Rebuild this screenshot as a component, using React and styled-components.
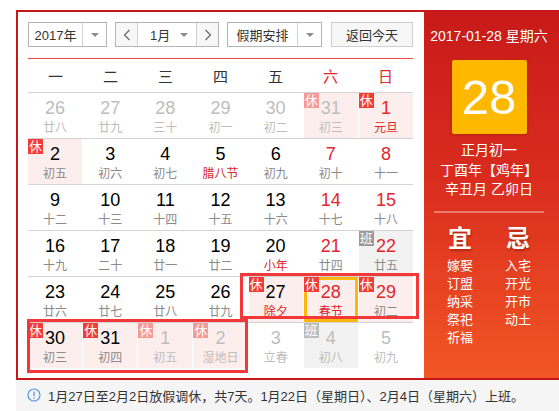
import React from 'react';
import styled, { createGlobalStyle, css } from 'styled-components';

const GlobalStyle = createGlobalStyle`
  html, body {
    margin: 0;
    padding: 0;
    background: #fff;
    overflow: hidden;
  }
  body {
    font-family: "Liberation Sans", "Noto Sans CJK SC", Arial, sans-serif;
    color: #333;
  }
`;

const WEEK = ['一', '二', '三', '四', '五', '六', '日'];

// f: other month, b: badge ('rest' | 'work'), r: red number, lr: red lunar, sel: selected
const ROWS = [
  [
    { d: 26, l: '廿八', f: 1 },
    { d: 27, l: '廿九', f: 1 },
    { d: 28, l: '三十', f: 1 },
    { d: 29, l: '初一', f: 1 },
    { d: 30, l: '初二', f: 1 },
    { d: 31, l: '初三', f: 1, b: 'rest' },
    { d: 1, l: '元旦', r: 1, lr: 1, b: 'rest' }
  ],
  [
    { d: 2, l: '初五', b: 'rest' },
    { d: 3, l: '初六' },
    { d: 4, l: '初七' },
    { d: 5, l: '腊八节', lr: 1 },
    { d: 6, l: '初九' },
    { d: 7, l: '初十', r: 1 },
    { d: 8, l: '十一', r: 1 }
  ],
  [
    { d: 9, l: '十二' },
    { d: 10, l: '十三' },
    { d: 11, l: '十四' },
    { d: 12, l: '十五' },
    { d: 13, l: '十六' },
    { d: 14, l: '十七', r: 1 },
    { d: 15, l: '十八', r: 1 }
  ],
  [
    { d: 16, l: '十九' },
    { d: 17, l: '二十' },
    { d: 18, l: '廿一' },
    { d: 19, l: '廿二' },
    { d: 20, l: '小年', lr: 1 },
    { d: 21, l: '廿四', r: 1 },
    { d: 22, l: '廿五', r: 1, b: 'work' }
  ],
  [
    { d: 23, l: '廿六' },
    { d: 24, l: '廿七' },
    { d: 25, l: '廿八' },
    { d: 26, l: '廿九' },
    { d: 27, l: '除夕', lr: 1, b: 'rest' },
    { d: 28, l: '春节', r: 1, lr: 1, b: 'rest', sel: 1 },
    { d: 29, l: '初二', r: 1, b: 'rest' }
  ],
  [
    { d: 30, l: '初三', b: 'rest' },
    { d: 31, l: '初四', b: 'rest' },
    { d: 1, l: '初五', f: 1, b: 'rest' },
    { d: 2, l: '湿地日', f: 1, b: 'rest' },
    { d: 3, l: '立春', f: 1 },
    { d: 4, l: '初八', f: 1, b: 'work' },
    { d: 5, l: '初九', f: 1 }
  ]
];

const YI = ['嫁娶', '订盟', '纳采', '祭祀', '祈福'];
const JI = ['入宅', '开光', '开市', '动土'];

export default function App() {
  return (
    <>
      <GlobalStyle />
      <Page>
        <Frame>
          <Main>
            <Toolbar>
              <Select $w={79}>
                <SelectText>2017年</SelectText>
                <Arrow><Caret /></Arrow>
              </Select>
              <MonthBox>
                <NavBtn>
                  <svg width="8" height="12" viewBox="0 0 8 12">
                    <polyline points="6.5,1 1.5,6 6.5,11" fill="none" stroke="#666" strokeWidth="1.2" />
                  </svg>
                </NavBtn>
                <MonthText>
                  <span>1月</span>
                  <Caret />
                </MonthText>
                <NavBtn $right>
                  <svg width="8" height="12" viewBox="0 0 8 12">
                    <polyline points="1.5,1 6.5,6 1.5,11" fill="none" stroke="#666" strokeWidth="1.2" />
                  </svg>
                </NavBtn>
              </MonthBox>
              <Select $w={95}>
                <SelectText>假期安排</SelectText>
                <Arrow><Caret /></Arrow>
              </Select>
              <TodayBtn>返回今天</TodayBtn>
            </Toolbar>

            <WeekHeader>
              {WEEK.map((w, i) => (
                <WeekDay key={w} $red={i >= 5}>{w}</WeekDay>
              ))}
            </WeekHeader>

            <Body>
              {ROWS.map((row, ri) => (
                <Row key={ri}>
                  {row.map((c, ci) => (
                    <Cell key={ci} $bg={c.b} $sel={c.sel}>
                      {c.b && (
                        <Badge $type={c.b} $faded={c.f}>{c.b === 'rest' ? '休' : '班'}</Badge>
                      )}
                      <DayNum $faded={c.f} $red={c.r}>{c.d}</DayNum>
                      <Lunar $faded={c.f} $red={c.lr}>{c.l}</Lunar>
                    </Cell>
                  ))}
                </Row>
              ))}
              <Mark $left={212} $top={181} $w={179} $h={46} />
              <Mark $left={-1} $top={227} $w={221} $h={54} />
            </Body>
          </Main>

          <Side>
            <SideDate>2017-01-28 星期六</SideDate>
            <BigDay>28</BigDay>
            <LunarInfo>
              <div>正月初一</div>
              <div>丁酉年【鸡年】</div>
              <div>辛丑月 乙卯日</div>
            </LunarInfo>
            <Divider />
            <Advice>
              <AdviceCol>
                <AdviceTitle>宜</AdviceTitle>
                {YI.map(t => <AdviceItem key={t}>{t}</AdviceItem>)}
              </AdviceCol>
              <AdviceCol>
                <AdviceTitle>忌</AdviceTitle>
                {JI.map(t => <AdviceItem key={t}>{t}</AdviceItem>)}
              </AdviceCol>
            </Advice>
          </Side>
        </Frame>

        <Notice>
          <svg width="14" height="14" viewBox="0 0 14 14">
            <circle cx="7" cy="7" r="6" fill="none" stroke="#5b97e8" strokeWidth="1.2" />
            <line x1="7" y1="3.5" x2="7" y2="8.2" stroke="#5b97e8" strokeWidth="1.3" />
            <circle cx="7" cy="10.2" r="0.8" fill="#5b97e8" />
          </svg>
          <span>1月27日至2月2日放假调休，共7天。1月22日（星期日）、2月4日（星期六）上班。</span>
        </Notice>
      </Page>
    </>
  );
}

const Page = styled.div`
  padding: 10px 0 0 16px;
`;

const Frame = styled.div`
  display: flex;
  width: 541px;
  border: 2px solid #c8171a;
  border-right: none;
`;

const Main = styled.div`
  width: 385px;
  padding: 10px 11px 10px 10px;
  background: #fff;
`;

const Toolbar = styled.div`
  display: flex;
  align-items: center;
  height: 25px;
  gap: 8px;
  font-size: 13px;
  color: #333;
`;

const Select = styled.div`
  display: flex;
  box-sizing: border-box;
  width: ${p => p.$w}px;
  height: 25px;
  border: 1px solid #b4b4b4;
  background: #fff;
`;

const SelectText = styled.div`
  flex: 1;
  display: flex;
  align-items: center;
  justify-content: center;
`;

const Arrow = styled.div`
  width: 23px;
  border-left: 1px solid #d0d0d0;
  display: flex;
  align-items: center;
  justify-content: center;
`;

const Caret = styled.span`
  display: inline-block;
  width: 0;
  height: 0;
  border-left: 4px solid transparent;
  border-right: 4px solid transparent;
  border-top: 4px solid #8c8c8c;
`;

const MonthBox = styled.div`
  display: flex;
  box-sizing: border-box;
  width: 104px;
  height: 25px;
  border: 1px solid #b4b4b4;
`;

const NavBtn = styled.div`
  width: 21px;
  background: #f7f7f7;
  display: flex;
  align-items: center;
  justify-content: center;
  ${p => p.$right ? css`border-left: 1px solid #d0d0d0;` : css`border-right: 1px solid #d0d0d0;`}
`;

const MonthText = styled.div`
  flex: 1;
  display: flex;
  align-items: center;
  justify-content: space-between;
  padding: 0 8px 0 12px;
`;

const TodayBtn = styled.div`
  margin-left: 1px;
  box-sizing: border-box;
  width: 82px;
  height: 25px;
  border: 1px solid #cfcfcf;
  background: #f7f7f7;
  display: flex;
  align-items: center;
  justify-content: center;
`;

const WeekHeader = styled.div`
  display: grid;
  grid-template-columns: repeat(7, 1fr);
  margin-top: 11px;
  height: 33px;
  border-top: 1px solid #f04b3c;
`;

const WeekDay = styled.div`
  display: flex;
  align-items: center;
  justify-content: center;
  font-size: 15px;
  color: ${p => (p.$red ? '#e3262c' : '#333')};
`;

const Body = styled.div`
  position: relative;
`;

const Row = styled.div`
  display: grid;
  grid-template-columns: repeat(7, 1fr);
  column-gap: 1px;
  border-top: 1px solid #d3d3d3;
`;

const Cell = styled.div`
  position: relative;
  box-sizing: border-box;
  height: 45px;
  padding-top: 5px;
  text-align: center;
  background: ${p => (p.$bg === 'rest' ? '#fdeeee' : p.$bg === 'work' ? '#f2f2f2' : '#fff')};
  ${p => p.$sel && css`box-shadow: inset 0 0 0 3px #ffb80a;`}
`;

const Badge = styled.span`
  position: absolute;
  left: 0;
  top: 0;
  width: 15px;
  height: 15px;
  line-height: 15px;
  font-size: 13px;
  color: #fff;
  text-align: center;
  background: ${p =>
    p.$type === 'rest'
      ? (p.$faded ? '#f59b97' : '#f23c35')
      : (p.$faded ? '#bdbdbd' : '#9a9a9a')};
`;

const DayNum = styled.div`
  font-family: "Liberation Sans", Arial, sans-serif;
  font-size: 18px;
  line-height: 20px;
  color: ${p => (p.$faded ? '#bdbdbd' : p.$red ? '#e3262c' : '#000')};
`;

const Lunar = styled.div`
  margin-top: 2px;
  font-size: 12px;
  line-height: 16px;
  color: ${p => (p.$faded ? '#bdbdbd' : p.$red ? '#d9262c' : '#8a8a8a')};
`;

const Mark = styled.div`
  position: absolute;
  box-sizing: border-box;
  left: ${p => p.$left}px;
  top: ${p => p.$top}px;
  width: ${p => p.$w}px;
  height: ${p => p.$h}px;
  border: 3px solid #f3383a;
  pointer-events: none;
`;

const Side = styled.div`
  flex: 1;
  padding: 16px 5px 0 0;
  display: flex;
  flex-direction: column;
  align-items: center;
  color: #fff;
  background: linear-gradient(180deg, #c81b19 0%, #d92c1f 45%, #f25624 100%);
`;

const SideDate = styled.div`
  font-size: 14px;
  line-height: 16px;
`;

const BigDay = styled.div`
  margin-top: 16px;
  width: 75px;
  height: 74px;
  border-radius: 2px;
  background: #ffb800;
  box-shadow: 0 1px 3px rgba(120, 30, 0, 0.35);
  display: flex;
  align-items: center;
  justify-content: center;
  font-family: "Liberation Sans", Arial, sans-serif;
  font-size: 49px;
  color: #fff;
`;

const LunarInfo = styled.div`
  margin-top: 7px;
  font-size: 14px;
  line-height: 19.5px;
  text-align: center;
`;

const Divider = styled.div`
  margin-top: 11px;
  width: 110px;
  height: 2px;
  background: rgba(255, 255, 255, 0.35);
`;

const Advice = styled.div`
  display: flex;
  gap: 32px;
  margin-top: 12px;
`;

const AdviceCol = styled.div`
  display: flex;
  flex-direction: column;
  align-items: center;
`;

const AdviceTitle = styled.div`
  font-size: 24px;
  line-height: 28px;
  font-weight: bold;
  text-shadow: 1px 2px 2px rgba(120, 20, 0, 0.45);
  margin-bottom: 4px;
`;

const AdviceItem = styled.div`
  font-size: 13px;
  line-height: 18px;
`;

const Notice = styled.div`
  display: flex;
  align-items: center;
  gap: 7px;
  width: 543px;
  box-sizing: border-box;
  height: 40px;
  padding: 0 0 10px 11px;
  background: #f5f5f5;
  font-size: 13px;
  color: #333;
`;
